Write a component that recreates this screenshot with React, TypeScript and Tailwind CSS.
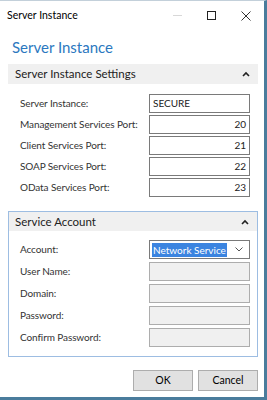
import React from 'react';

const font = { fontFamily: 'Lato, "Noto Sans", Arial, sans-serif' };

interface FieldRowProps {
  label: string;
  value?: string;
  align?: 'left' | 'right';
  disabled?: boolean;
  inBox?: boolean;
}

const FieldRow = ({ label, value, align = 'left', disabled, inBox }: FieldRowProps) => (
  <div className="flex items-center h-[21px]">
    <span
      className={`${inBox ? 'w-[140px] pl-[11px]' : 'w-[141px] pl-[12px]'} whitespace-nowrap text-[10px] tracking-[-0.1px] text-[#333]`}
    >
      {label}
    </span>
    <div
      className={`w-[101px] h-[19px] border flex items-center px-[3px] text-[10px] ${
        disabled ? 'bg-[#f0f0f0] border-[#adadad]' : 'bg-white border-[#7a7a7a]'
      } ${align === 'right' ? 'justify-end' : 'justify-start'} text-[#222]`}
    >
      {value}
    </div>
  </div>
);

const Caret = () => (
  <svg width="8" height="6" viewBox="0 0 8 6" className="mr-[8px]">
    <path d="M1 5 L4 2 L7 5" stroke="#222" strokeWidth="1.6" fill="none" />
  </svg>
);

const App = () => {
  return (
    <div
      className="w-[267px] h-[400px] bg-white border-t border-t-[#c3d0da] border-r-[3px] border-r-[#4a7c9c] border-b-[3px] border-b-[#4a7c9c] flex flex-col"
      style={font}
    >
      {/* title bar */}
      <div className="h-[29px] flex items-center justify-between pl-[7px]">
        <span className="text-[10.5px] text-black">Server Instance</span>
        <div className="flex items-center">
          <div className="w-[34px] flex justify-center">
            <div className="w-[9px] h-px bg-[#d8d8d8]" />
          </div>
          <div className="w-[34px] flex justify-center">
            <div className="w-[9px] h-[9px] border border-[#222]" />
          </div>
          <div className="w-[36px] flex justify-center">
            <svg width="10" height="10" viewBox="0 0 10 10">
              <path d="M0.5 0.5 L9.5 9.5 M9.5 0.5 L0.5 9.5" stroke="#333" strokeWidth="1" />
            </svg>
          </div>
        </div>
      </div>

      <div className="pl-[12px] pt-[6px] h-[34px] text-[15px] text-[#2b78c0]">
        Server Instance
      </div>

      {/* settings section */}
      <div className="mx-[8px] w-[250px]">
        <div className="h-[20px] bg-[#f0f0f0] flex items-center justify-between pl-[7px]">
          <span className="text-[11.5px] text-[#222]">Server Instance Settings</span>
          <Caret />
        </div>
        <div className="pt-[9px] flex flex-col">
          <FieldRow label="Server Instance:" value="SECURE" />
          <FieldRow label="Management Services Port:" value="20" align="right" />
          <FieldRow label="Client Services Port:" value="21" align="right" />
          <FieldRow label="SOAP Services Port:" value="22" align="right" />
          <FieldRow label="OData Services Port:" value="23" align="right" />
        </div>
      </div>

      {/* service account section */}
      <div className="mt-[13px] mx-[8px] w-[250px] border border-[#9dbde2] pb-[8px]">
        <div className="h-[19px] bg-[#f0f0f0] flex items-center justify-between pl-[6px]">
          <span className="text-[11.5px] text-[#222]">Service Account</span>
          <Caret />
        </div>
        <div className="pt-[8px] flex flex-col gap-[1px]">
          <div className="flex items-center h-[21px]">
            <span className="w-[140px] pl-[11px] text-[10px] tracking-[-0.1px] text-[#333]">Account:</span>
            <div className="w-[101px] h-[19px] border border-[#7a7a7a] bg-white flex items-center justify-between pl-[2px] pr-[6px]">
              <span className="bg-[#3b84e0] text-white text-[10px] leading-[14px] px-[1px] whitespace-nowrap">
                Network Service
              </span>
              <svg width="8" height="5" viewBox="0 0 8 5">
                <path d="M0.5 0.5 L4 4 L7.5 0.5" stroke="#555" strokeWidth="1" fill="none" />
              </svg>
            </div>
          </div>
          <FieldRow label="User Name:" disabled inBox />
          <FieldRow label="Domain:" disabled inBox />
          <FieldRow label="Password:" disabled inBox />
          <FieldRow label="Confirm Password:" disabled inBox />
        </div>
      </div>

      <div className="flex justify-end gap-[5px] pr-[6px] mt-[13px]">
        <button className="w-[60px] h-[21px] bg-[#e1e1e1] border border-[#adadad] text-[10.5px] text-black">
          OK
        </button>
        <button className="w-[60px] h-[21px] bg-[#e1e1e1] border border-[#adadad] text-[10.5px] text-black">
          Cancel
        </button>
      </div>
    </div>
  );
};

export default App;
